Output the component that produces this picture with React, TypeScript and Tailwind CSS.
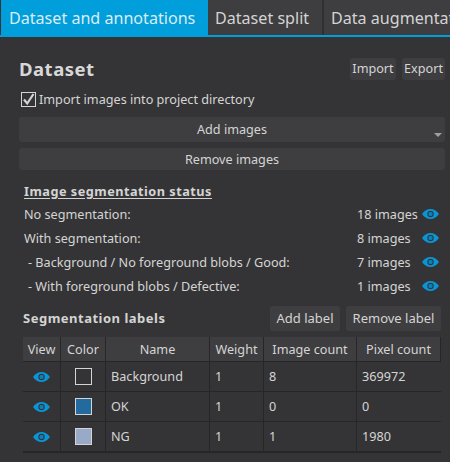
const font = "[font-family:'Noto_Sans',sans-serif]";

const statusRows = [
	{ label: "No segmentation:", count: "18 images", indent: false },
	{ label: "With segmentation:", count: "8 images", indent: false },
	{ label: "- Background / No foreground blobs / Good:", count: "7 images", indent: true },
	{ label: "- With foreground blobs / Defective:", count: "1 images", indent: true },
];

const labels = [
	{ name: "Background", color: "bg-[#343436]", weight: "1", images: "8", pixels: "369972" },
	{ name: "OK", color: "bg-[#236a9f]", weight: "1", images: "0", pixels: "0" },
	{ name: "NG", color: "bg-[#98aac8]", weight: "1", images: "1", pixels: "1980" },
];

const headers = ["View", "Color", "Name", "Weight", "Image count", "Pixel count"];

function Eye() {
	return (
		<svg width="17" height="10" viewBox="0 0 17 10">
			<path d="M0 5C2.500 1.600 5.300 0 8.500 0S14.500 1.600 17 5C14.500 8.400 11.700 10 8.500 10S2.500 8.400 0 5Z" fill="#0a96d6" />
			<circle cx="8.500" cy="5" r="3.200" fill="#343436" />
			<circle cx="8.500" cy="5" r="2.200" fill="#0a7fb8" />
		</svg>
	);
}

function Button({ children, className }: { children: string; className: string }) {
	return (
		<button className={`flex items-center justify-center rounded-[3px] bg-[#3e3e40] leading-none text-[#d4d4d4] ${className}`}>
			{children}
		</button>
	);
}

export default function App() {
	return (
		<div className={`flex h-[462px] w-[450px] flex-col overflow-hidden bg-[#343436] text-[12.650px] text-[#d4d4d4] ${font}`}>
			<div className="flex h-[37px] border-b-2 border-[#009fdb] pl-px">
				<div className="flex w-[207px] items-center bg-[#009fdb] pl-2 pt-px text-[16.100px] text-[#dcecf4]">Dataset and annotations</div>
				<div className="flex w-[115px] items-center border-r border-[#303032] bg-[#3e3e40] pl-[7px] pt-px text-[16.100px]">Dataset split</div>
				<div className="flex flex-1 items-center overflow-hidden whitespace-nowrap border-l border-[#303032] bg-[#3e3e40] pl-[7px] pt-px text-[16.100px]">Data augmentation</div>
			</div>

			<div className="flex flex-col pl-[19px] pr-[5px]">
				<div className="mt-5 flex h-[23px] items-center justify-between">
					<h1 className="text-[18.500px] font-bold tracking-[0.5px] text-[#d8d8d8]">Dataset</h1>
					<div className="flex gap-[6px]">
						<Button className="h-[22px] w-[46px]">Import</Button>
						<Button className="h-[22px] w-[43px]">Export</Button>
					</div>
				</div>

				<label className="mt-[7px] flex h-6 items-center gap-[3px] pl-[2px]">
					<span className="flex h-[15px] w-[15px] items-center justify-center border border-[#d4d4d4]">
						<svg width="13" height="13" viewBox="0 0 13 13">
							<path d="M2 6.500L5.200 10.500L11.500 1" fill="none" stroke="#d4d4d4" strokeWidth="2.200" />
						</svg>
					</span>
					<span>Import images into project directory</span>
				</label>

				<div className="relative mt-[6px]">
					<Button className="h-[25px] w-full">Add images</Button>
					<span className="absolute bottom-[5px] right-[3px] h-0 w-0 border-x-[4px] border-t-[4px] border-x-transparent border-t-[#a0a0a0]" />
				</div>
				<Button className="mt-[6px] h-[22px] w-full">Remove images</Button>

				<div className="mt-[12px] pl-[5px] text-[12.700px] font-bold tracking-[0.5px] underline underline-offset-2">Image segmentation status</div>

				<div className="mt-px flex flex-col pl-[5px] pr-[6px]">
					{statusRows.map((row) => (
						<div className="flex h-6 items-center" key={row.label}>
							<span className={`flex-1 ${row.indent ? "pl-1" : ""}`}>{row.label}</span>
							<span className="w-[65px]">{row.count}</span>
							<Eye />
						</div>
					))}
				</div>

				<div className="mt-2 flex h-[25px] items-center pl-1">
					<span className="flex-1 text-[13px] font-bold tracking-[0.5px]">Segmentation labels</span>
					<Button className="mr-[6px] h-[25px] w-[70px] text-[13px]">Add label</Button>
					<Button className="mr-1 h-[25px] w-[95px] text-[13px]">Remove label</Button>
				</div>

				<div className="mt-[6px] ml-1 grid w-[418px] grid-cols-[38px_45px_104px_54px_93px_84px] border-b border-[#262628]">
					{headers.map((header) => (
						<div className="flex h-[25px] items-center justify-center border-b border-r border-[#262628] bg-[#3e3e40] last:border-r-0" key={header}>
							{header}
						</div>
					))}
					{labels.map((label) => (
						<div className="contents" key={label.name}>
							<div className="flex h-[30px] items-center justify-center border-b border-r border-[#262628]"><Eye /></div>
							<div className="flex h-[30px] items-center justify-center border-b border-r border-[#262628]">
								<span className={`h-[17px] w-[17px] border border-[#d4d4d4] ${label.color}`} />
							</div>
							<div className="flex h-[30px] items-center border-b border-r border-[#262628] pl-[5px]">{label.name}</div>
							<div className="flex h-[30px] items-center border-b border-r border-[#262628] pl-[5px]">{label.weight}</div>
							<div className="flex h-[30px] items-center border-b border-r border-[#262628] pl-[5px]">{label.images}</div>
							<div className="flex h-[30px] items-center border-b border-[#262628] pl-[5px]">{label.pixels}</div>
						</div>
					))}
				</div>
			</div>
		</div>
	);
}
